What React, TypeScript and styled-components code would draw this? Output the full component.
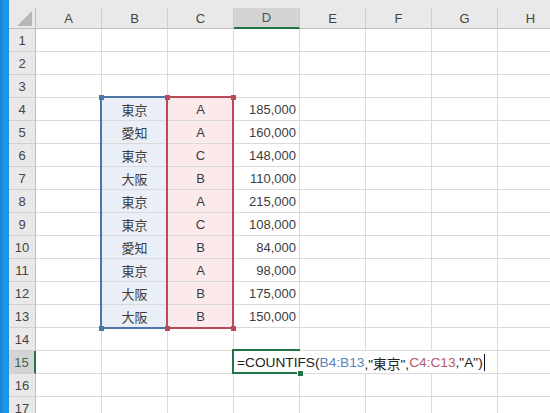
import React from "react";
import styled, { createGlobalStyle, css } from "styled-components";

const GlobalStyle = createGlobalStyle`
  body {
    margin: 0;
    background: #ffffff;
    overflow: hidden;
    font-family: "Liberation Sans", "Noto Sans CJK JP", sans-serif;
  }
`;

const COL_W = 66;
const ROW_H = 23;
const STRIP_W = 9;
const HEAD_W = 27;
const TOP_H = 8;
const COLHEAD_H = 21;

const COLUMNS = ["A", "B", "C", "D", "E", "F", "G", "H"];
const ROW_COUNT = 17;

const DATA: Record<number, [string, string, string]> = {
  4: ["東京", "A", "185,000"],
  5: ["愛知", "A", "160,000"],
  6: ["東京", "C", "148,000"],
  7: ["大阪", "B", "110,000"],
  8: ["東京", "A", "215,000"],
  9: ["東京", "C", "108,000"],
  10: ["愛知", "B", "84,000"],
  11: ["東京", "A", "98,000"],
  12: ["大阪", "B", "175,000"],
  13: ["大阪", "B", "150,000"],
};

const BLUE = "#4f74a8";
const RED = "#b84a5c";
const GREEN = "#217346";

const colLeft = (i: number) => STRIP_W + HEAD_W + i * COL_W;
const rowTop = (r: number) => TOP_H + COLHEAD_H + (r - 1) * ROW_H;

const Sheet = styled.div`
  position: relative;
  display: grid;
  grid-template-columns: ${STRIP_W}px ${HEAD_W}px repeat(8, ${COL_W}px);
  grid-template-rows: ${TOP_H}px ${COLHEAD_H}px repeat(${ROW_COUNT}, ${ROW_H}px);
  width: max-content;
`;

const Strip = styled.div`
  grid-column: 1;
  grid-row: 1 / -1;
  background: linear-gradient(90deg, #1683d8, #1e9be8 60%, #1a8fe0);
`;

const TopBand = styled.div`
  grid-column: 2 / -1;
  grid-row: 1;
  background: #e9e9e9;
`;

const Corner = styled.div`
  position: relative;
  background: #e9e9e9;
  border-right: 1px solid #bdbdbd;
  border-bottom: 1px solid #bdbdbd;
  box-sizing: border-box;

  &::after {
    content: "";
    position: absolute;
    right: 3px;
    bottom: 2px;
    width: 0;
    height: 0;
    border-left: 15px solid transparent;
    border-bottom: 15px solid #b7b7b7;
  }
`;

const ColHead = styled.div<{ $selected?: boolean }>`
  display: flex;
  align-items: center;
  justify-content: center;
  box-sizing: border-box;
  background: #e9e9e9;
  border-right: 1px solid #cfcfcf;
  border-bottom: 1px solid #bdbdbd;
  font-size: 13px;
  color: #444;
  ${(p) =>
    p.$selected &&
    css`
      background: #d4d4d4;
      border-bottom: 2px solid ${GREEN};
      color: #3f5a4b;
    `}
`;

const RowHead = styled.div<{ $selected?: boolean }>`
  display: flex;
  align-items: center;
  justify-content: center;
  box-sizing: border-box;
  background: #e9e9e9;
  border-right: 1px solid #bdbdbd;
  border-bottom: 1px solid #cfcfcf;
  font-size: 13px;
  color: #444;
  ${(p) =>
    p.$selected &&
    css`
      background: #d4d4d4;
      border-right: 2px solid ${GREEN};
      color: #3d6650;
    `}
`;

const Cell = styled.div<{ $align?: "left" | "center" | "right"; $fill?: string }>`
  display: flex;
  align-items: center;
  justify-content: ${(p) =>
    p.$align === "right" ? "flex-end" : p.$align === "center" ? "center" : "flex-start"};
  box-sizing: border-box;
  padding: 1px 3px 0;
  border-right: 1px solid #dadada;
  border-bottom: 1px solid #dadada;
  background: ${(p) => p.$fill || "#ffffff"};
  font-size: 13px;
  color: #3c3c3c;
  white-space: nowrap;
`;

const RangeBox = styled.div<{ $color: string }>`
  position: absolute;
  box-sizing: border-box;
  border: 2px solid ${(p) => p.$color};
  pointer-events: none;
`;

const Handle = styled.span<{ $color: string; $x: "l" | "r"; $y: "t" | "b" }>`
  position: absolute;
  width: 5px;
  height: 5px;
  background: ${(p) => p.$color};
  ${(p) => (p.$x === "l" ? "left: -3.5px;" : "right: -3.5px;")}
  ${(p) => (p.$y === "t" ? "top: -3.5px;" : "bottom: -3.5px;")}
`;

const Editor = styled.div`
  position: absolute;
  display: flex;
  align-items: center;
  box-sizing: border-box;
  height: ${ROW_H - 1}px;
  padding: 1px 0 0 3px;
  background: #ffffff;
  font-size: 13.7px;
  color: #222;
  white-space: nowrap;
`;

const Ref = styled.span<{ $color: string }>`
  color: ${(p) => p.$color};
`;

const Caret = styled.span`
  display: inline-block;
  width: 1px;
  height: 17px;
  margin-left: 1px;
  background: #111;
`;

const ActiveBox = styled.div`
  position: absolute;
  box-sizing: border-box;
  border: 2px solid ${GREEN};
  border-right: none;
`;

const FillHandle = styled.span`
  position: absolute;
  right: -3px;
  bottom: -4px;
  width: 5px;
  height: 5px;
  background: ${GREEN};
  outline: 1px solid #ffffff;
`;

const App = () => {
  const rows = Array.from({ length: ROW_COUNT }, (_, i) => i + 1);
  const activeRow = 15;
  const activeCol = 3;

  const bTop = rowTop(4) - 2;
  const bHeight = rowTop(14) - rowTop(4) + 3;

  return (
    <>
      <GlobalStyle />
      <Sheet>
        <Strip />
        <TopBand />
        <Corner />
        {COLUMNS.map((c, i) => (
          <ColHead key={c} $selected={i === activeCol}>
            {c}
          </ColHead>
        ))}
        {rows.map((r) => {
          const d = DATA[r];
          return (
            <React.Fragment key={r}>
              <RowHead $selected={r === activeRow}>{r}</RowHead>
              {COLUMNS.map((c, i) => {
                if (d && i === 1)
                  return (
                    <Cell key={c} $align="center" $fill="#e9eef7">
                      {d[0]}
                    </Cell>
                  );
                if (d && i === 2)
                  return (
                    <Cell key={c} $align="center" $fill="#fbe9eb">
                      {d[1]}
                    </Cell>
                  );
                if (d && i === 3)
                  return (
                    <Cell key={c} $align="right">
                      {d[2]}
                    </Cell>
                  );
                return <Cell key={c} />;
              })}
            </React.Fragment>
          );
        })}

        <RangeBox
          $color={BLUE}
          style={{ left: colLeft(1) - 2, top: bTop, width: COL_W + 2, height: bHeight }}
        >
          <Handle $color={BLUE} $x="l" $y="t" />
          <Handle $color={BLUE} $x="l" $y="b" />
        </RangeBox>
        <RangeBox
          $color={RED}
          style={{ left: colLeft(2) - 2, top: bTop, width: COL_W + 2, height: bHeight }}
        >
          <Handle $color={RED} $x="l" $y="t" />
          <Handle $color={RED} $x="r" $y="t" />
          <Handle $color={RED} $x="l" $y="b" />
          <Handle $color={RED} $x="r" $y="b" />
        </RangeBox>

        <Editor style={{ left: colLeft(activeCol), top: rowTop(activeRow) }}>
          =COUNTIFS(<Ref $color="#5a80b8">B4:B13</Ref>,"東京",<Ref $color="#b5596a">C4:C13</Ref>,"A")
          <Caret />
        </Editor>
        <ActiveBox
          style={{
            left: colLeft(activeCol) - 2,
            top: rowTop(activeRow) - 2,
            width: COL_W + 2,
            height: ROW_H + 2,
          }}
        >
          <FillHandle />
        </ActiveBox>
      </Sheet>
    </>
  );
};

export default App;
